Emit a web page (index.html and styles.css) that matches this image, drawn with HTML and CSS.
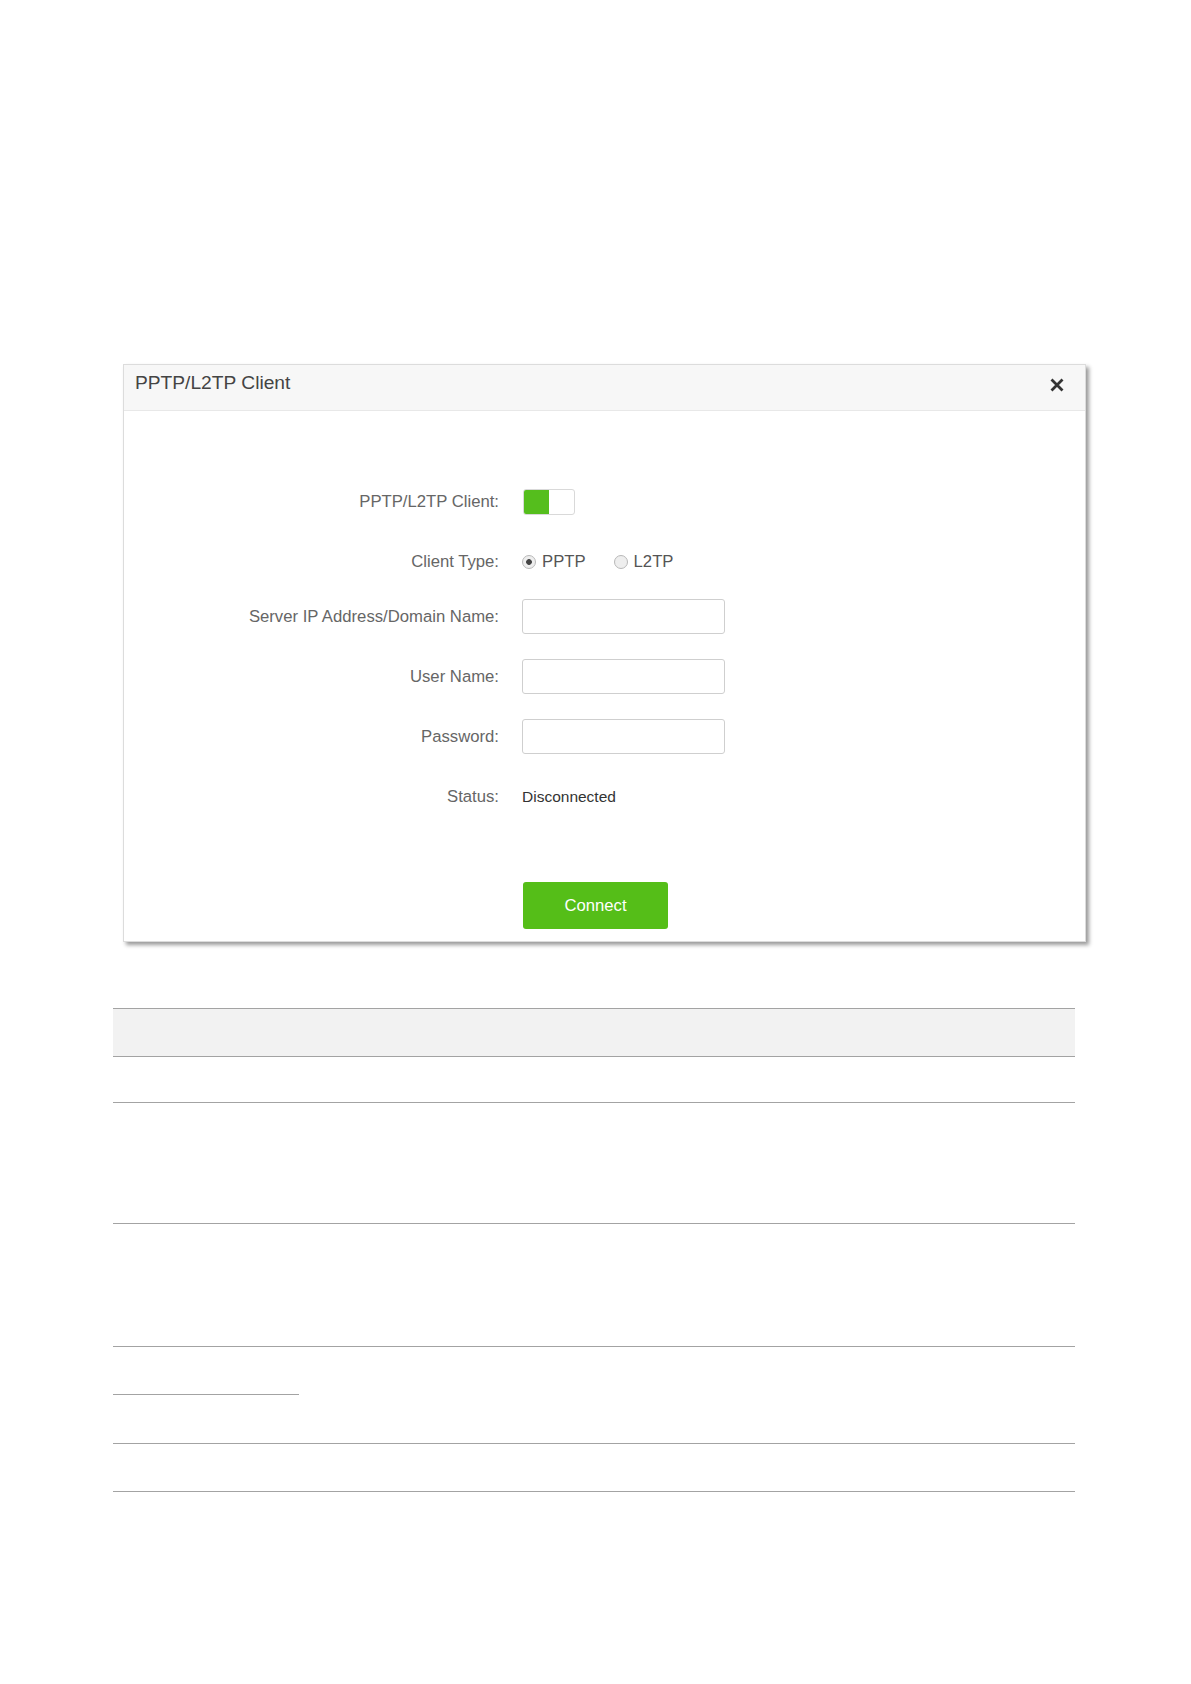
FILE: index.html
```html
<!DOCTYPE html>
<html lang="en">
    <head>
        <meta charset="utf-8">
        <meta name="viewport" content="width=device-width, initial-scale=1">
        <title>PPTP/L2TP Client</title>
        <link rel="stylesheet" href="styles.css">
    </head>
    <body>
        <div class="page">
            <!-- fenetre de configuration du client VPN -->
            <div class="dialog">
                <div class="dialog-header">
                    <span class="dialog-title">PPTP/L2TP Client</span>
                    <svg class="close" width="16" height="16" viewBox="0 0 16 16">
                        <path d="M2.5 2.5 L13.5 13.5 M13.5 2.5 L2.5 13.5" stroke="#333" stroke-width="2.8" fill="none"/>
                    </svg>
                </div>
                <div class="dialog-body">
                    <form class="form">
                        <label class="form-label">PPTP/L2TP Client:</label>
                        <div class="form-field">
                            <span class="switch"><span class="switch-on"></span></span>
                        </div>

                        <label class="form-label shift">Client Type:</label>
                        <div class="form-field radios shift">
                            <label class="radio"><input type="radio" name="type" checked> PPTP</label>
                            <label class="radio"><input type="radio" name="type"> L2TP</label>
                        </div>

                        <label class="form-label">Server IP Address/Domain Name:</label>
                        <div class="form-field"><input class="text-input" type="text"></div>

                        <label class="form-label">User Name:</label>
                        <div class="form-field"><input class="text-input" type="text"></div>

                        <label class="form-label">Password:</label>
                        <div class="form-field"><input class="text-input" type="password"></div>

                        <label class="form-label">Status:</label>
                        <div class="form-field status">Disconnected</div>
                    </form>
                    <div class="actions">
                        <button class="btn-connect" type="button">Connect</button>
                    </div>
                </div>
            </div>

            <!-- tableau (vide) sous la capture -->
            <div class="table">
                <div class="row head"></div>
                <div class="row r46"></div>
                <div class="row r121"></div>
                <div class="row r123"></div>
                <div class="row r97">
                    <div class="split"></div>
                </div>
                <div class="row r48"></div>
            </div>
        </div>
    </body>
</html>
```

FILE: styles.css
```css
body {
    margin: 0;
    background: #fff;
    font-family: "Liberation Sans", Arial, sans-serif;
}
.page {
    padding-top: 364px;
    padding-bottom: 100px;
}
.dialog {
    box-sizing: border-box;
    width: 963px;
    height: 578px;
    margin-left: 123px;
    border: 1px solid #dcdcdc;
    background: #fff;
    box-shadow: 3px 3px 4px rgba(0, 0, 0, 0.4);
}
.dialog-header {
    box-sizing: border-box;
    height: 46px;
    display: flex;
    justify-content: space-between;
    align-items: flex-start;
    padding: 0 20px 0 11px;
    background: #f7f7f7;
    border-bottom: 1px solid #e8e8e8;
}
.dialog-title {
    padding-top: 6px;
    font-size: 19.2px;
    line-height: 24px;
    color: #444;
}
.close {
    margin-top: 12px;
}
.dialog-body {
    padding-top: 73px;
}
.form {
    display: grid;
    grid-template-columns: 375px 1fr;
    grid-template-rows: 35px 30px 35px 35px 35px 35px;
    column-gap: 23px;
    row-gap: 25px;
    margin: 0;
}
.form-label {
    display: flex;
    align-items: center;
    justify-content: flex-end;
    font-size: 16.7px;
    color: #666;
}
.form-field {
    display: flex;
    align-items: center;
}
.shift {
    padding-top: 5px;
}
.switch {
    box-sizing: border-box;
    display: flex;
    width: 52px;
    height: 26px;
    margin-left: 1px;
    border: 1px solid #d9d9d9;
    border-radius: 3px;
    background: #fff;
    overflow: hidden;
}
.switch-on {
    width: 25px;
    background: #55be1d;
}
.radios {
    gap: 28px;
}
.radio {
    display: flex;
    align-items: center;
    gap: 6px;
    font-size: 16.7px;
    color: #555;
}
.radio input {
    appearance: none;
    margin: 0;
    width: 14px;
    height: 14px;
    border: 1px solid #b8b8b8;
    border-radius: 50%;
    background: #eee;
}
.radio input:checked {
    background: radial-gradient(circle, #444 0 2.5px, #eee 3.2px);
}
.text-input {
    box-sizing: border-box;
    width: 203px;
    height: 35px;
    margin: 0;
    border: 1px solid #cfcfcf;
    border-radius: 3px;
    background: #fff;
}
.status {
    font-size: 15.5px;
    color: #333;
}
.actions {
    margin-top: 68px;
    padding-left: 399px;
}
.btn-connect {
    width: 145px;
    height: 47px;
    border: none;
    border-radius: 3px;
    background: #55be18;
    color: #fff;
    font-family: "Liberation Sans", Arial, sans-serif;
    font-size: 16.7px;
}
.table {
    width: 962px;
    margin: 66px 0 0 113px;
    border-top: 1px solid #a3a3a3;
}
.row {
    box-sizing: border-box;
    border-bottom: 1px solid #a3a3a3;
}
.row.head {
    height: 48px;
    background: #f2f2f2;
}
.r46 {
    height: 46px;
}
.r121 {
    height: 121px;
}
.r123 {
    height: 123px;
}
.r97 {
    height: 97px;
}
.r48 {
    height: 48px;
}
.split {
    box-sizing: border-box;
    width: 186px;
    height: 48px;
    border-bottom: 1px solid #a3a3a3;
}
```
